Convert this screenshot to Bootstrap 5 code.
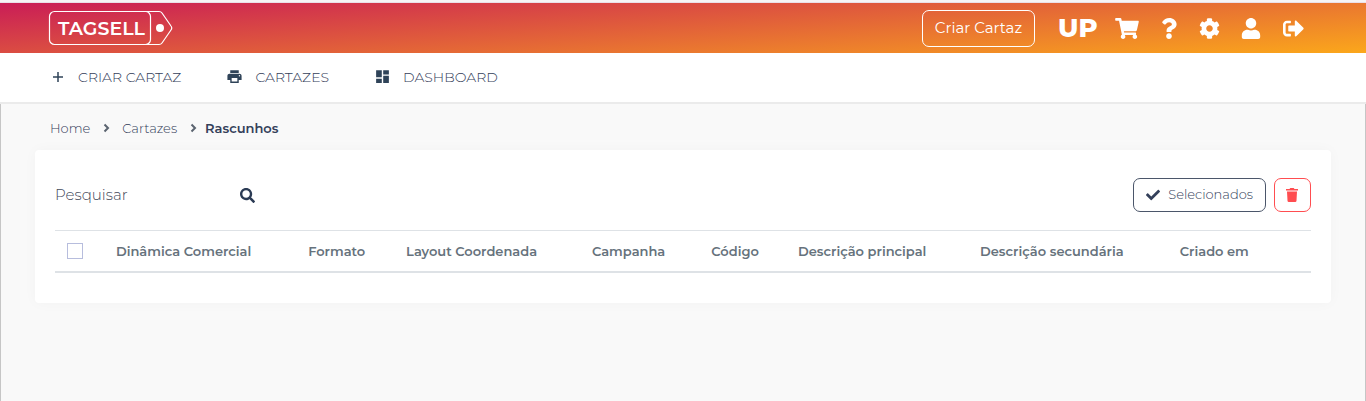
<!DOCTYPE html>
<html lang="pt-BR">
<head>
<meta charset="utf-8">
<meta name="viewport" content="width=device-width, initial-scale=1">
<title>Tagsell - Rascunhos</title>
<link href="https://cdn.jsdelivr.net/npm/bootstrap@5.3.0/dist/css/bootstrap.min.css" rel="stylesheet">
<style>
  body { font-family: Montserrat, Inter, "Open Sans", sans-serif; font-weight: 300; font-size: 14px; line-height: 20px; color: #34405a; background: #f9f9f9; }
  a { color: inherit; text-decoration: none; }
  svg { display: block; fill: currentColor; flex: none; }
  .topbar { height: 53px; border-top: 2px solid #f6f4f6; background: linear-gradient(176deg, #c91c57, #fba71b) padding-box; box-shadow: inset 0 1px #eadfe8; padding: 1px 62px 0 48px; color: #fff; }
  .logo-text { font-family: Montserrat, Lato, sans-serif; font-size: 19px; font-weight: 600; }
  .btn-create { --bs-btn-color: #fff; --bs-btn-border-color: #fff; --bs-btn-hover-color: #fff; --bs-btn-hover-border-color: #fff; width: 113px; height: 37px; padding: 0; font-size: 15px; font-weight: 400; border-radius: 7px; margin-right: 23px; }
  .user-tag { font-size: 26px; font-weight: 800; line-height: 36px; width: 57px; }
  .tool { width: 42px; }
  .mainnav { height: 51px; border-bottom: 2px solid #ebebeb; padding: 0 50px 2px; gap: 45px; }
  .mainnav a { gap: 12px; }
  .mainnav svg { color: #2f4358; }
  .content { border: solid #c6c6c6; border-width: 0 1px; padding: 14px 34px; }
  .crumbs { font-size: 13px; padding-left: 15px; margin-bottom: 12px; gap: 12px; }
  .crumbs svg { color: #5b6470; }
  .crumbs .current { font-weight: 600; margin-left: -4px; }
  .panel { background: #fff; border-radius: 4px; box-shadow: 0 0 14px rgba(0,0,0,.03); padding: 28px 20px 30px; }
  .search { width: 201px; }
  .search input { width: 180px; padding: 0; border: 0; outline: 0; font-weight: 300; font-size: 15px; background: none; color: inherit; }
  .search input::placeholder { color: #3f4859; opacity: 1; }
  .search button { padding: 0; border: 0; background: none; color: #2b3b54; }
  .btn-tool { height: 34px; padding: 0 12px; font-size: 13px; font-weight: 300; border-radius: 7px; }
  .btn-select { --bs-btn-color: #34405a; --bs-btn-border-color: #4b566a; width: 133px; }
  .btn-trash { --bs-btn-color: #ff4d50; --bs-btn-border-color: #ff4d50; width: 37px; padding: 0 11px; }
  .drafts { table-layout: fixed; margin: 18px 0 0; border-top: 1px solid #dee2e6; }
  .drafts th { height: 41px; padding: 0 0 0 12px; border-bottom: 2px solid #dee2e6; color: #66727c; background: none; font-size: 13px; font-weight: 600; white-space: nowrap; vertical-align: middle; }
  .drafts input { appearance: none; display: block; width: 16px; height: 16px; margin: 0; border: 1px solid #b7bddd; background: #fff; }
  .drafts input:checked { background: #6571b5; }
</style>
</head>
<body>
<div class="d-flex flex-column min-vh-100">
  <header class="topbar d-flex align-items-center">
    <a href="#" class="me-auto" aria-label="Tagsell">
      <svg width="125" height="36" viewBox="0 0 125 36">
        <g fill="none" stroke="#fff" stroke-width="1.2"><rect x="1.5" y="1.5" width="101" height="33" rx="5"/><path d="M98 1.5h13q2 0 3 1.500l9 13q1.500 2 0 4l-9 13q-1 1.500-3 1.500H98"/></g>
        <circle cx="112" cy="18" r="4"/>
        <text class="logo-text" x="10" y="25">TAGSELL</text>
      </svg>
    </a>
    <button type="button" class="btn btn-create">Criar Cartaz</button>
    <a href="#" class="user-tag">UP</a>
    <a href="#" class="tool" aria-label="Carrinho"><svg width="24" height="21" viewBox="0 0 576 512"><path d="M528.120 301.319l47.273-208C578.806 78.301 567.391 64 551.990 64H159.208l-9.166-44.810C147.758 8.021 137.930 0 126.529 0H24C10.745 0 0 10.745 0 24v16c0 13.255 10.745 24 24 24h69.883l70.248 343.435C147.325 417.100 136 435.222 136 456c0 30.928 25.072 56 56 56s56-25.072 56-56c0-15.674-6.447-29.835-16.824-40h209.647C430.447 426.165 424 440.326 424 456c0 30.928 25.072 56 56 56s56-25.072 56-56c0-22.172-12.888-41.332-31.579-50.405l5.517-24.276c3.413-15.018-8.002-29.319-23.403-29.319H218.117l-6.545-32h293.145c11.206 0 20.920-7.754 23.403-18.681z"/></svg></a>
    <a href="#" class="tool ps-1" aria-label="Ajuda"><svg width="16" height="21" viewBox="0 0 384 512"><path d="M202.021 0C122.202 0 70.503 32.703 29.914 91.026c-7.363 10.580-5.093 25.086 5.178 32.874l43.138 32.709c10.373 7.865 25.132 6.026 33.253-4.148 25.049-31.381 43.630-49.449 82.757-49.449 30.764 0 68.816 19.799 68.816 49.631 0 22.552-18.617 34.134-48.993 51.164-35.423 19.860-82.299 44.576-82.299 106.405V320c0 13.255 10.745 24 24 24h72.471c13.255 0 24-10.745 24-24v-5.773c0-42.860 125.268-44.645 125.268-160.627C377.504 66.256 286.902 0 202.021 0zM192 373.459c-38.196 0-69.271 31.075-69.271 69.271C122.729 480.926 153.804 512 192 512s69.271-31.075 69.271-69.271-31.075-69.270-69.271-69.270z"/></svg></a>
    <a href="#" class="tool" aria-label="Configurações"><svg width="21" height="21" viewBox="0 0 512 512"><path d="M487.400 315.700l-42.600-24.600c4.300-23.200 4.300-47 0-70.200l42.600-24.600c4.900-2.800 7.100-8.600 5.500-14-11.100-35.600-30-67.800-54.700-94.600-3.800-4.100-10-5.100-14.800-2.300L380.800 110c-17.900-15.400-38.500-27.300-60.800-35.100V25.800c0-5.600-3.900-10.500-9.400-11.700-36.700-8.200-74.300-7.800-109.200 0-5.500 1.200-9.400 6.100-9.400 11.700V75c-22.200 7.900-42.800 19.800-60.800 35.100L88.700 85.500c-4.900-2.800-11-1.900-14.800 2.300-24.700 26.700-43.600 58.900-54.700 94.600-1.700 5.400.6 11.200 5.500 14L67.300 221c-4.300 23.200-4.300 47 0 70.200l-42.600 24.600c-4.900 2.800-7.100 8.600-5.500 14 11.100 35.600 30 67.800 54.700 94.600 3.800 4.100 10 5.100 14.800 2.300l42.600-24.600c17.900 15.400 38.500 27.300 60.800 35.100v49.200c0 5.600 3.900 10.500 9.400 11.700 36.700 8.200 74.300 7.800 109.200 0 5.500-1.200 9.400-6.100 9.400-11.700v-49.200c22.200-7.900 42.800-19.800 60.800-35.100l42.600 24.600c4.900 2.800 11 1.900 14.800-2.300 24.700-26.700 43.600-58.900 54.700-94.600 1.500-5.500-.7-11.300-5.600-14.100zM256 336c-44.100 0-80-35.900-80-80s35.900-80 80-80 80 35.900 80 80-35.900 80-80 80z"/></svg></a>
    <a href="#" class="tool" aria-label="Perfil"><svg width="20" height="21" viewBox="0 0 448 512"><path d="M224 256c70.700 0 128-57.300 128-128S294.700 0 224 0 96 57.300 96 128s57.300 128 128 128zm89.600 32h-16.700c-22.200 10.200-46.900 16-72.900 16s-50.600-5.800-72.900-16h-16.700C60.200 288 0 348.200 0 422.400V464c0 26.500 21.500 48 48 48h352c26.500 0 48-21.500 48-48v-41.600c0-74.200-60.200-134.400-134.400-134.400z"/></svg></a>
    <a href="#" aria-label="Sair"><svg width="21" height="21" viewBox="0 0 512 512"><path d="M497 273L329 441c-15 15-41 4.500-41-17v-96H152c-13.300 0-24-10.700-24-24v-96c0-13.300 10.700-24 24-24h136V88c0-21.400 25.900-32 41-17l168 168c9.300 9.400 9.300 24.600 0 34zM192 436v-40c0-6.600-5.400-12-12-12H96c-17.700 0-32-14.300-32-32V160c0-17.700 14.300-32 32-32h84c6.600 0 12-5.400 12-12V76c0-6.600-5.400-12-12-12H96c-53 0-96 43-96 96v192c0 53 43 96 96 96h84c6.600 0 12-5.400 12-12z"/></svg></a>
  </header>
  <nav class="mainnav bg-white d-flex align-items-center">
    <a href="#" class="d-flex align-items-center"><svg width="16" height="16" viewBox="0 0 16 16"><path d="M7.250 3h1.500v4.250H13v1.500H8.750V13h-1.500V8.750H3v-1.500h4.250z"/></svg>CRIAR CARTAZ</a>
    <a href="#" class="d-flex align-items-center"><svg width="17" height="17" viewBox="0 0 24 24"><path d="M19 8H5c-1.660 0-3 1.340-3 3v6h4v4h12v-4h4v-6c0-1.660-1.340-3-3-3zm-3 11H8v-5h8v5zm3-7c-.550 0-1-.450-1-1s.450-1 1-1 1 .450 1 1-.450 1-1 1zm-1-9H6v4h12V3z"/></svg>CARTAZES</a>
    <a href="#" class="d-flex align-items-center"><svg width="17" height="17" viewBox="0 0 24 24"><path d="M3 13h8V3H3v10zm0 8h8v-6H3v6zm10 0h8V11h-8v10zm0-18v6h8V3h-8z"/></svg>DASHBOARD</a>
  </nav>
  <main class="content flex-grow-1">
    <nav class="crumbs d-flex align-items-center" aria-label="Trilha">
      <a href="#">Home</a>
      <svg width="8" height="10" viewBox="0 0 8 10"><path d="M2.500 1.500L6 5 2.500 8.500" fill="none" stroke="currentColor" stroke-width="2"/></svg>
      <a href="#">Cartazes</a>
      <svg width="8" height="10" viewBox="0 0 8 10"><path d="M2.500 1.500L6 5 2.500 8.500" fill="none" stroke="currentColor" stroke-width="2"/></svg>
      <span class="current" aria-current="page">Rascunhos</span>
    </nav>
    <section class="panel">
      <div class="d-flex align-items-center gap-2">
        <form class="search d-flex align-items-center justify-content-between me-auto">
          <input type="text" placeholder="Pesquisar" aria-label="Pesquisar">
          <button type="button" aria-label="Buscar"><svg width="17" height="15" viewBox="0 0 512 512"><path d="M505 442.700L405.300 343c-4.500-4.500-10.600-7-17-7H372c27.600-35.300 44-79.700 44-128C416 93.100 322.900 0 208 0S0 93.100 0 208s93.100 208 208 208c48.300 0 92.700-16.400 128-44v16.300c0 6.400 2.500 12.500 7 17l99.700 99.700c9.400 9.400 24.600 9.400 33.900 0l28.300-28.300c9.400-9.400 9.400-24.600.1-34zM208 336c-70.700 0-128-57.200-128-128 0-70.700 57.200-128 128-128 70.700 0 128 57.200 128 128 0 70.700-57.200 128-128 128z"/></svg></button>
        </form>
        <button type="button" class="btn btn-tool btn-select d-flex align-items-center justify-content-between"><svg width="14" height="14" viewBox="0 0 512 512"><path d="M173.898 439.404l-166.400-166.400c-9.997-9.997-9.997-26.206 0-36.204l36.203-36.204c9.997-9.998 26.207-9.998 36.204 0L192 312.690 432.095 72.596c9.997-9.997 26.207-9.997 36.204 0l36.203 36.204c9.997 9.997 9.997 26.206 0 36.204l-294.400 294.401c-9.998 9.997-26.207 9.997-36.204-.001z"/></svg>Selecionados</button>
        <button type="button" class="btn btn-tool btn-trash" aria-label="Excluir"><svg width="12" height="14" viewBox="0 0 12 14"><path d="M0 1h3.500l.8-1h3.400l.8 1H12v1.500H0zM1 3.500h10l-.5 9.200q-.1 1.300-1.300 1.300H2.800q-1.200 0-1.300-1.300z"/></svg></button>
      </div>
      <table class="table drafts">
        <colgroup><col style="width:3.9%"><col style="width:15.3%"><col style="width:7.8%"><col style="width:14.8%"><col style="width:9.5%"><col style="width:6.9%"><col style="width:14.5%"><col style="width:15.9%"><col style="width:11.4%"></colgroup>
        <thead><tr>
          <th scope="col"><input type="checkbox" aria-label="Selecionar todos"></th>
          <th scope="col">Dinâmica Comercial</th><th scope="col">Formato</th><th scope="col">Layout Coordenada</th><th scope="col">Campanha</th><th scope="col">Código</th><th scope="col">Descrição principal</th><th scope="col">Descrição secundária</th><th scope="col">Criado em</th>
        </tr></thead>
      </table>
    </section>
  </main>
</div>
<script src="https://cdn.jsdelivr.net/npm/bootstrap@5.3.0/dist/js/bootstrap.bundle.min.js"></script>
</body>
</html>
